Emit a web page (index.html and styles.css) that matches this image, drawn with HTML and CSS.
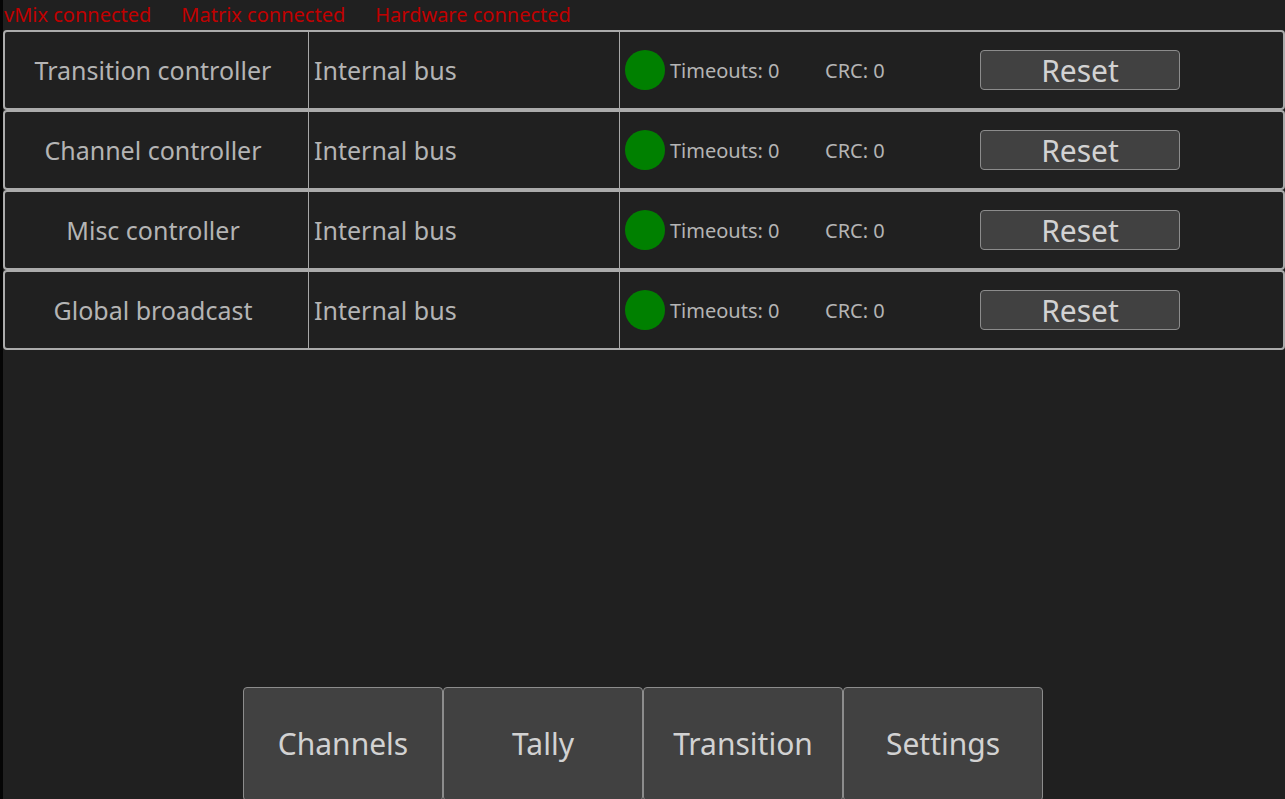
FILE: index.html
```html
<!DOCTYPE html>
<html>
<head>
<meta charset="utf-8">
<link rel="stylesheet" href="styles.css">
</head>
<body>
<div class="edge"></div>
<div class="app">
  <div class="status">
    <span class="st">vMix connected</span>
    <span class="st">Matrix connected</span>
    <span class="st">Hardware connected</span>
  </div>
  <div class="rows">
    <div class="row">
      <div class="name">Transition controller</div>
      <div class="bus">Internal bus</div>
      <div class="state">
        <span class="dot"></span>
        <span class="to">Timeouts: 0</span>
        <span class="crc">CRC: 0</span>
        <button class="reset">Reset</button>
      </div>
    </div>
    <div class="row">
      <div class="name">Channel controller</div>
      <div class="bus">Internal bus</div>
      <div class="state">
        <span class="dot"></span>
        <span class="to">Timeouts: 0</span>
        <span class="crc">CRC: 0</span>
        <button class="reset">Reset</button>
      </div>
    </div>
    <div class="row">
      <div class="name">Misc controller</div>
      <div class="bus">Internal bus</div>
      <div class="state">
        <span class="dot"></span>
        <span class="to">Timeouts: 0</span>
        <span class="crc">CRC: 0</span>
        <button class="reset">Reset</button>
      </div>
    </div>
    <div class="row">
      <div class="name">Global broadcast</div>
      <div class="bus">Internal bus</div>
      <div class="state">
        <span class="dot"></span>
        <span class="to">Timeouts: 0</span>
        <span class="crc">CRC: 0</span>
        <button class="reset">Reset</button>
      </div>
    </div>
  </div>
  <div class="spacer"></div>
  <div class="nav">
    <button class="navbtn">Channels</button>
    <button class="navbtn">Tally</button>
    <button class="navbtn">Transition</button>
    <button class="navbtn">Settings</button>
  </div>
</div>
</body>
</html>
```
FILE: styles.css
```css
html, body {
  margin: 0;
  padding: 0;
  height: 799px;
  overflow: hidden;
}
body {
  display: flex;
  background: #202020;
  font-family: "Noto Sans", "Open Sans", sans-serif;
  color: #b4b4b4;
}
.edge {
  width: 3px;
  flex: none;
  background: #050505;
}
.app {
  flex: 1;
  display: flex;
  flex-direction: column;
  height: 799px;
}
.status {
  height: 30px;
  display: flex;
  gap: 30px;
  padding-left: 1px;
  font-size: 20px;
  line-height: 30px;
  color: #c00000;
}
.rows {
  display: flex;
  flex-direction: column;
}
.row {
  height: 80px;
  box-sizing: border-box;
  border: 2px solid #ababab;
  border-radius: 4px;
  display: flex;
  align-items: stretch;
}
.name {
  width: 304px;
  box-sizing: border-box;
  border-right: 1px solid #a8a8a8;
  padding-right: 7px;
  display: flex;
  align-items: center;
  justify-content: center;
  font-size: 25px;
}
.bus {
  width: 311px;
  box-sizing: border-box;
  border-right: 1px solid #a8a8a8;
  padding-left: 5px;
  display: flex;
  align-items: center;
  font-size: 25px;
}
.state {
  flex: 1;
  display: flex;
  align-items: center;
  padding-left: 5px;
  font-size: 20px;
}
.dot {
  width: 40px;
  height: 40px;
  border-radius: 50%;
  background: #008000;
  flex: none;
}
.to {
  margin-left: 5px;
  width: 155px;
}
.crc {
  width: 155px;
}
.reset {
  width: 200px;
  height: 40px;
  box-sizing: border-box;
  background: #414141;
  border: 1px solid #8c8c8c;
  border-radius: 4px;
  color: #d2d2d2;
  font-family: "Noto Sans", "Open Sans", sans-serif;
  font-size: 30px;
  padding: 2px 0 0 0;
  line-height: 36px;
}
.spacer {
  flex: 1;
}
.nav {
  display: flex;
  padding-left: 240px;
}
.navbtn {
  width: 200px;
  height: 114px;
  flex: none;
  box-sizing: border-box;
  background: #414141;
  border: 1px solid #8c8c8c;
  border-radius: 4px;
  color: #d2d2d2;
  font-family: "Noto Sans", "Open Sans", sans-serif;
  font-size: 30px;
  padding: 0 0 1px 0;
  margin-bottom: -2px;
}
```
